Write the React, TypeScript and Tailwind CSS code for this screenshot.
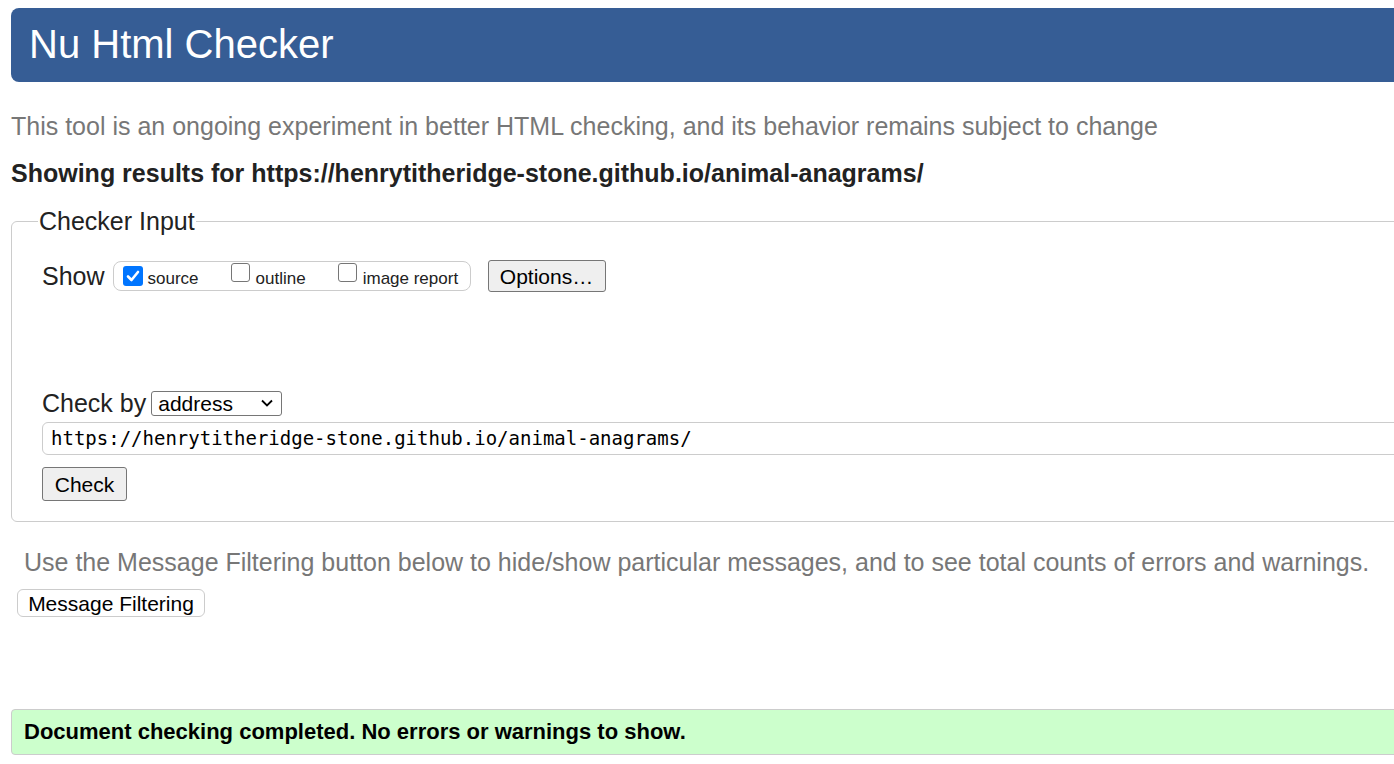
import React from "react";

const F = { fontFamily: '"Liberation Sans", Arial, sans-serif' };

function Box({ checked }: { checked?: boolean }) {
  if (checked) {
    return (
      <span className="inline-flex h-[20px] w-[20px] items-center justify-center rounded-[3px] bg-[#0075ff]">
        <svg width="16" height="16" viewBox="0 0 16 16">
          <path d="M3 8.5 L6.5 12 L13 4" fill="none" stroke="white" strokeWidth="2.6" strokeLinecap="round" strokeLinejoin="round" />
        </svg>
      </span>
    );
  }
  return <span className="inline-block h-[19px] w-[19px] rounded-[3px] border border-[#767676] bg-white" />;
}

export default function App() {
  return (
    <div className="w-[1394px] h-[764px] overflow-hidden bg-white text-[#222]" style={F}>
      <div className="w-[1440px] pl-[11px]">
        <div className="mt-[8px] h-[74px] rounded-l-[8px] bg-[#365d95] pl-[18px] flex items-center">
          <h1 className="text-[40px] leading-none text-white pb-[2px]">Nu Html Checker</h1>
        </div>
        <p className="mt-[30px] text-[25px] leading-[28px] text-[#777]">
          This tool is an ongoing experiment in better HTML checking, and its behavior remains subject to change
        </p>
        <p className="mt-[19px] text-[25px] leading-[28px] font-bold text-[#222]">
          Showing results for https://henrytitheridge-stone.github.io/animal-anagrams/
        </p>
        <fieldset className="mt-[20px] h-[315px] rounded-l-[6px] border border-[#ccc] pl-[30px] pr-0 relative">
          <legend className="ml-[-4px] px-[1px] text-[25px] leading-[28px] text-[#222]">Checker Input</legend>
          <div className="mt-[25px] flex items-center">
            <span className="text-[25px] leading-[28px]">Show</span>
            <div className="ml-[8px] flex h-[30px] w-[358px] items-center rounded-[8px] border border-[#ccc] pl-[9px]">
              <Box checked />
              <span className="ml-[5px] mt-[6px] text-[17px] leading-[20px]">source</span>
              <span className="ml-[32px]"><Box /></span>
              <span className="ml-[6px] mt-[6px] text-[17px] leading-[20px]">outline</span>
              <span className="ml-[32px]"><Box /></span>
              <span className="ml-[6px] mt-[6px] text-[17px] leading-[20px]">image report</span>
            </div>
            <button className="ml-[17px] h-[32px] w-[118px] rounded-[3px] border border-[#767676] bg-[#efefef] text-[21px] leading-none text-black">
              Options…
            </button>
          </div>
          <div className="mt-[97px] flex items-center">
            <span className="text-[25px] leading-[28px]">Check by</span>
            <div className="ml-[5px] flex h-[25px] w-[131px] items-center justify-between rounded-[3px] border border-[#767676] bg-white pl-[6px] pr-[7px]">
              <span className="text-[21px] leading-none text-black">address</span>
              <svg width="14" height="10" viewBox="0 0 14 10">
                <path d="M2 2.5 L7 7.5 L12 2.5" fill="none" stroke="black" strokeWidth="1.8" />
              </svg>
            </div>
          </div>
          <div className="mt-[5px] flex h-[33px] items-center rounded-l-[6px] border border-[#ccc] pl-[8px]">
            <span className="leading-none text-black" style={{ fontFamily: '"DejaVu Sans Mono", "Liberation Mono", monospace', fontSize: "19px" }}>
              https://henrytitheridge-stone.github.io/animal-anagrams/
            </span>
          </div>
          <button className="mt-[12px] h-[34px] w-[85px] rounded-[3px] border border-[#767676] bg-[#efefef] text-[21px] leading-none text-black">
            Check
          </button>
        </fieldset>
        <p className="mt-[26px] ml-[13px] text-[25px] leading-[28px] text-[#777]">
          Use the Message Filtering button below to hide/show particular messages, and to see total counts of errors and warnings.
        </p>
        <button className="mt-[13px] ml-[6px] h-[28px] w-[188px] rounded-[6px] border border-[#ccc] bg-white text-[21px] leading-none text-black">
          Message Filtering
        </button>
        <div className="mt-[91px] flex h-[46px] items-center rounded-l-[4px] border border-[#ccc] bg-[#ccffcc] pl-[12px]">
          <span className="text-[22px] font-bold leading-none text-black">
            Document checking completed. No errors or warnings to show.
          </span>
        </div>
      </div>
    </div>
  );
}
